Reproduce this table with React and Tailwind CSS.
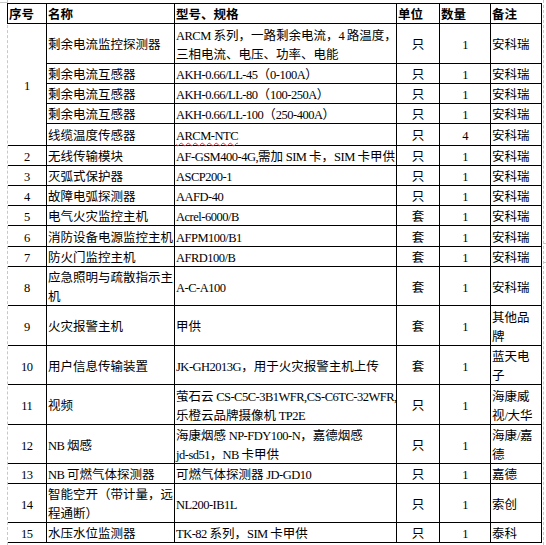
import React from "react"

const ROWS = [
  { n: "1", rs: 5, name: ["剩余电流监控探测器"], model: ["ARCM 系列，一路剩余电流，4 路温度，", "三相电流、电压、功率、电能"], unit: "只", qty: "1", note: ["安科瑞"], h: "h-[40px]" },
  { name: ["剩余电流互感器"], model: ["AKH-0.66/LL-45（0-100A）"], unit: "只", qty: "1", note: ["安科瑞"], h: "h-[20px]" },
  { name: ["剩余电流互感器"], model: ["AKH-0.66/LL-80（100-250A）"], unit: "只", qty: "1", note: ["安科瑞"], h: "h-[20px]" },
  { name: ["剩余电流互感器"], model: ["AKH-0.66/LL-100（250-400A）"], unit: "只", qty: "1", note: ["安科瑞"], h: "h-[20px]" },
  { name: ["线缆温度传感器"], model: ["ARCM-NTC"], wavy: true, unit: "只", qty: "4", note: ["安科瑞"], h: "h-[22px]" },
  { n: "2", name: ["无线传输模块"], model: ["AF-GSM400-4G,需加 SIM 卡，SIM 卡甲供"], unit: "只", qty: "1", note: ["安科瑞"], h: "h-[20px]" },
  { n: "3", name: ["灭弧式保护器"], model: ["ASCP200-1"], unit: "只", qty: "1", note: ["安科瑞"], h: "h-[20px]" },
  { n: "4", name: ["故障电弧探测器"], model: ["AAFD-40"], unit: "只", qty: "1", note: ["安科瑞"], h: "h-[20px]" },
  { n: "5", name: ["电气火灾监控主机"], model: ["Acrel-6000/B"], unit: "套", qty: "1", note: ["安科瑞"], h: "h-[20px]" },
  { n: "6", name: ["消防设备电源监控主机"], model: ["AFPM100/B1"], unit: "套", qty: "1", note: ["安科瑞"], h: "h-[21px]" },
  { n: "7", name: ["防火门监控主机"], model: ["AFRD100/B"], unit: "套", qty: "1", note: ["安科瑞"], h: "h-[20px]" },
  { n: "8", name: ["应急照明与疏散指示主", "机"], model: ["A-C-A100"], unit: "套", qty: "1", note: ["安科瑞"], h: "h-[39px]" },
  { n: "9", name: ["火灾报警主机"], model: ["甲供"], unit: "套", qty: "1", note: ["其他品", "牌"], h: "h-[40px]" },
  { n: "10", name: ["用户信息传输装置"], model: ["JK-GH2013G，用于火灾报警主机上传"], unit: "套", qty: "1", note: ["蓝天电", "子"], h: "h-[38px]" },
  { n: "11", name: ["视频"], model: ["萤石云 CS-C5C-3B1WFR,CS-C6TC-32WFR,", "乐橙云品牌摄像机 TP2E"], unit: "只", qty: "1", note: ["海康威", "视/大华"], h: "h-[40px]" },
  { n: "12", name: ["NB 烟感"], model: ["海康烟感 NP-FDY100-N，嘉德烟感", "jd-sd51，NB 卡甲供"], unit: "只", qty: "1", note: ["海康/嘉", "德"], h: "h-[39px]" },
  { n: "13", name: ["NB 可燃气体探测器"], model: ["可燃气体探测器 JD-GD10"], unit: "只", qty: "1", note: ["嘉德"], h: "h-[19px]" },
  { n: "14", name: ["智能空开（带计量，远", "程通断）"], model: ["NL200-IB1L"], unit: "只", qty: "1", note: ["索创"], h: "h-[39px]" },
  { n: "15", name: ["水压水位监测器"], model: ["TK-82 系列，SIM 卡甲供"], unit: "只", qty: "1", note: ["泰科"], h: "h-[19px]" },
]

// ascii runs in a narrow serif face, like the Word doc
function T({ s }) {
  const parts = s.split(/([\x20-\x7e]+)/).filter(Boolean)
  return parts.map((p, i) =>
    /^[\x20-\x7e]+$/.test(p)
      ? <span key={i} className="font-['Liberation_Serif',serif] leading-none tracking-[-0.5px]">{p}</span>
      : <React.Fragment key={i}>{p}</React.Fragment>
  )
}

function Lines({ lines, wavy }) {
  return lines.map((l, i) => (
    <div key={i} className={wavy ? "underline decoration-wavy decoration-red-500 decoration-1 underline-offset-2" : ""}>
      <T s={l} />
    </div>
  ))
}

const cell = "border border-black align-middle p-0 whitespace-nowrap"

export default function App() {
  return (
    <div className="relative w-[546px] h-[545px] bg-white overflow-hidden text-black font-['Noto_Sans_CJK_SC',sans-serif] text-[12.5px] leading-[19px]">
      {/* page guides */}
      <div className="absolute left-[7px] top-0 bottom-0 border-l border-dashed border-[#c8c8c8]" />
      <div className="absolute left-[543px] top-0 bottom-0 border-l border-dashed border-[#c8c8c8]" />
      <div className="absolute left-0 top-[2px] w-[7px] border-t border-[#c8c8c8]" />
      <div className="absolute left-[543px] top-[243px] w-[3px] h-[20px] border-t border-b border-[#c8c8c8]" />

      <table className="relative table-fixed border-collapse ml-[7px] mt-[3px] w-[534px]">
        <colgroup>
          <col className="w-[39px]" />
          <col className="w-[128px]" />
          <col className="w-[222px]" />
          <col className="w-[43px]" />
          <col className="w-[51px]" />
          <col className="w-[51px]" />
        </colgroup>
        <thead>
          <tr className="h-[20px] font-bold text-left">
            <th className={`${cell} pl-px`}>序号</th>
            <th className={`${cell} pl-px`}>名称</th>
            <th className={`${cell} pl-px`}>型号、规格</th>
            <th className={`${cell} pl-px`}>单位</th>
            <th className={`${cell} pl-px`}>数量</th>
            <th className={`${cell} pl-px`}>备注</th>
          </tr>
        </thead>
        <tbody>
          {ROWS.map((r, i) => (
            <tr key={i} className={r.h}>
              {r.n && (
                <td rowSpan={r.rs || 1} className={`${cell} border-l-0 text-center`}>
                  <T s={r.n} />
                </td>
              )}
              <td className={`${cell} pl-px`}><Lines lines={r.name} /></td>
              <td className={`${cell} pl-px`}><Lines lines={r.model} wavy={r.wavy} /></td>
              <td className={`${cell} text-center`}>{r.unit}</td>
              <td className={`${cell} text-center`}><T s={r.qty} /></td>
              <td className={`${cell} pl-px`}><Lines lines={r.note} /></td>
            </tr>
          ))}
        </tbody>
      </table>
    </div>
  )
}
